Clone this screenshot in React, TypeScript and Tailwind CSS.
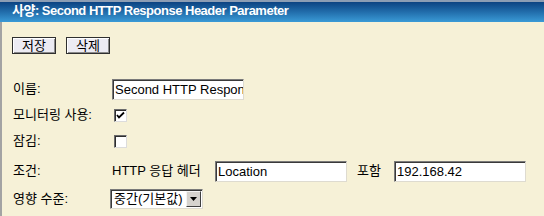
import React from 'react'

const font = { fontFamily: '"Liberation Sans", "Noto Sans CJK KR", sans-serif' }

function Check({ checked }: { checked?: boolean }) {
  return (
    <span className="inline-flex h-[13px] w-[13px] items-center justify-center border border-t-[#6b6b6b] border-l-[#6b6b6b] border-b-[#dcdcdc] border-r-[#dcdcdc] bg-white shadow-[inset_1px_1px_0_#2e2e2e]">
      {checked && (
        <svg width="9" height="9" viewBox="0 0 9 9">
          <path d="M1 4 L3 6.5 L8 1.5" fill="none" stroke="#000" strokeWidth="1.8" />
        </svg>
      )}
    </span>
  )
}

function TextBox({ value, w }: { value: string; w: string }) {
  return (
    <div
      className={`${w} h-[21px] overflow-hidden whitespace-nowrap border border-t-[#7a7a7a] border-l-[#7a7a7a] border-b-[#dedbd0] border-r-[#dedbd0] bg-white pl-[2px] text-[13px] leading-[19px] text-black shadow-[inset_1px_1px_0_#3a3a3a]`}
    >
      {value}
    </div>
  )
}

function Btn({ label }: { label: string }) {
  return (
    <button className="h-[17px] w-[44px] border border-[#2f2f2f] bg-[#ecebf3] text-[13px] leading-[14px] text-black shadow-[inset_1px_1px_0_#ffffff,inset_-1px_-1px_0_#8a8a8a]">
      {label}
    </button>
  )
}

export default function App() {
  return (
    <div className="h-[216px] w-[544px] overflow-hidden bg-[#f6f1d7]" style={font}>
      <div className="h-[22px] border-t-2 border-[#8c9db4] bg-gradient-to-b from-[#0c4382] to-[#3a9ad6] pl-[12px] text-[13px] font-bold leading-[18px] tracking-[-0.5px] text-white">
        사양: Second HTTP Response Header Parameter
      </div>
      <div className="h-[194px] border-l-2 border-[#a3a3a3] pl-[10px]">
        <div className="flex gap-[10px] pt-[15px]">
          <Btn label="저장" />
          <Btn label="삭제" />
        </div>
        <div className="mt-[22px] pl-[1px] text-[13px] text-black">
          <div className="flex h-[26px] items-center">
            <span className="w-[99px]">이름:</span>
            <TextBox value="Second HTTP Response Header Parameter" w="w-[132px]" />
          </div>
          <div className="flex h-[26px] items-center">
            <span className="w-[101px]">모니터링 사용:</span>
            <Check checked />
          </div>
          <div className="flex h-[26px] items-center">
            <span className="w-[101px]">잠김:</span>
            <Check />
          </div>
          <div className="flex h-[34px] items-center">
            <span className="w-[99px]">조건:</span>
            <span className="w-[103px]">HTTP 응답 헤더</span>
            <TextBox value="Location" w="w-[132px]" />
            <span className="ml-[10px] w-[37px]">포함</span>
            <TextBox value="192.168.42" w="w-[132px]" />
          </div>
          <div className="flex h-[22px] items-center">
            <span className="w-[97px]">영향 수준:</span>
            <div className="flex h-[20px] w-[93px] items-center border border-t-[#7a7a7a] border-l-[#7a7a7a] border-b-[#dedbd0] border-r-[#dedbd0] bg-white shadow-[inset_1px_1px_0_#3a3a3a]">
              <span className="flex-1 pl-[3px] leading-[16px]">중간(기본값)</span>
              <span className="mr-[1px] flex h-[16px] w-[15px] items-center justify-center border border-t-[#f4f4f4] border-l-[#f4f4f4] border-b-[#404040] border-r-[#404040] bg-[#d6d3ce]">
                <svg width="7" height="4" viewBox="0 0 7 4">
                  <path d="M0 0 H7 L3.5 4 Z" fill="#000" />
                </svg>
              </span>
            </div>
          </div>
        </div>
      </div>
    </div>
  )
}
